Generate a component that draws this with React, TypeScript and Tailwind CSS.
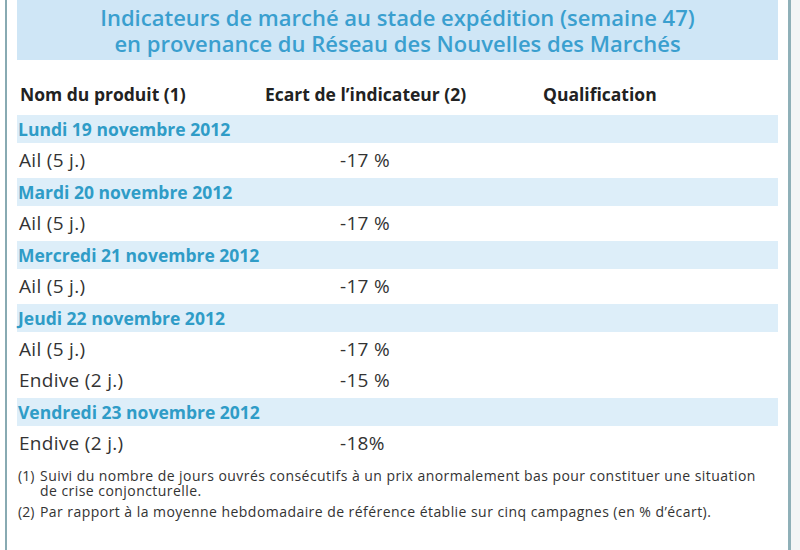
const days = [
  { label: "Lundi 19 novembre 2012", rows: [{ name: "Ail (5 j.)", value: "-17 %" }] },
  { label: "Mardi 20 novembre 2012", rows: [{ name: "Ail (5 j.)", value: "-17 %" }] },
  { label: "Mercredi 21 novembre 2012", rows: [{ name: "Ail (5 j.)", value: "-17 %" }] },
  {
    label: "Jeudi 22 novembre 2012",
    rows: [
      { name: "Ail (5 j.)", value: "-17 %" },
      { name: "Endive (2 j.)", value: "-15 %" },
    ],
  },
  { label: "Vendredi 23 novembre 2012", rows: [{ name: "Endive (2 j.)", value: "-18%" }] },
]

export default function App() {
  return (
    <div
      className="relative h-[550px] w-[800px] overflow-hidden bg-white text-[#333]"
      style={{ fontFamily: "'Open Sans', Lato, sans-serif" }}
    >
      {/* frame lines */}
      <div className="absolute left-[5px] top-0 h-full w-[2px] bg-[#88aab2]" />
      <div className="absolute left-[788px] top-0 h-full w-[3px] bg-[#8fb0b8]" />
      <div className="absolute left-[791px] top-0 h-full w-[9px] bg-[#f3f5f6]" />

      <div className="ml-[17px] w-[761px]">
        {/* title */}
        <div className="flex h-[60px] flex-col items-center justify-center bg-[#cfe6f6] text-[22px] font-semibold leading-[26px] text-[#3a9fcf]">
          <div>Indicateurs de marché au stade expédition (semaine 47)</div>
          <div>en provenance du Réseau des Nouvelles des Marchés</div>
        </div>

        {/* header */}
        <div className="mt-[20px] grid h-[28px] grid-cols-[245px_278px_1fr] items-center pl-[3px] text-[17.5px] font-bold text-[#222]">
          <div>Nom du produit (1)</div>
          <div>Ecart de l’indicateur (2)</div>
          <div>Qualification</div>
        </div>

        {/* rows */}
        <div className="mt-[5px]">
          {days.map((d) => (
            <div key={d.label}>
              <div className="py-[2px]">
                <div className="flex h-[28px] items-center bg-[#ddeef9] pl-[1px] text-[17.5px] font-bold text-[#2f9cc7]">
                  {d.label}
                </div>
              </div>
              {d.rows.map((r, i) => (
                <div
                  key={i}
                  className="grid h-[31px] grid-cols-[245px_278px_1fr] items-center pl-[2px] text-[19px] tracking-[0.3px]"
                >
                  <div>{r.name}</div>
                  <div className="pl-[76px]">{r.value}</div>
                  <div />
                </div>
              ))}
            </div>
          ))}
        </div>

        {/* notes */}
        <div className="mt-[9px] pl-[1px] text-[14px] leading-[15px] tracking-[0.45px] text-[#333]">
          <div className="flex">
            <span className="w-[22px] shrink-0 tracking-normal">(1)</span>
            <span>
              Suivi du nombre de jours ouvrés consécutifs à un prix anormalement bas pour constituer une situation
              <br />
              de crise conjoncturelle.
            </span>
          </div>
          <div className="mt-[6px] flex">
            <span className="w-[22px] shrink-0 tracking-normal">(2)</span>
            <span>Par rapport à la moyenne hebdomadaire de référence établie sur cinq campagnes (en % d’écart).</span>
          </div>
        </div>
      </div>
    </div>
  )
}
